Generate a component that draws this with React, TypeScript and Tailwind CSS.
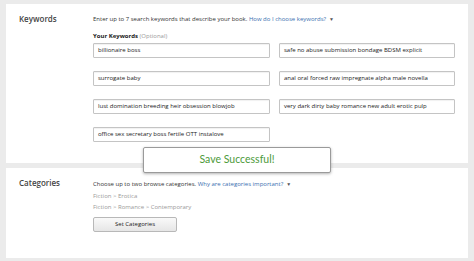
const keywords = [
  "billionaire boss",
  "safe no abuse submission bondage BDSM explicit",
  "surrogate baby",
  "anal oral forced raw impregnate alpha male novella",
  "lust domination breeding heir obsession blowjob",
  "very dark dirty baby romance new adult erotic pulp",
  "office sex secretary boss fertile OTT instalove",
];

const font = { fontFamily: '"Open Sans", "Liberation Sans", sans-serif' };

function Caret() {
  return <span className="ml-[3px] text-[5px] text-[#555] align-middle">▼</span>;
}

export default function App() {
  return (
    <div
      className="relative w-[474px] h-[261px] bg-[#ebebeb] px-[6px] pt-[4px] flex flex-col gap-[5px] text-[#333] overflow-hidden"
      style={font}
    >
      <section className="bg-white h-[159px] flex">
        <div className="w-[87px] pl-[13px] pt-[10px] text-[8px] leading-[10px] font-semibold text-[#444]">
          Keywords
        </div>
        <div className="flex-1 pt-[11px] pr-[13px]">
          <p className="text-[6px] leading-[8px]">
            Enter up to 7 search keywords that describe your book.{" "}
            <span className="text-[#3a6fb0]">How do I choose keywords?</span>
            <Caret />
          </p>
          <p className="mt-[9px] text-[6px] leading-[8px] font-bold text-[#222]">
            Your Keywords <span className="font-normal text-[#999]">(Optional)</span>
          </p>
          <div className="mt-[3px] grid grid-cols-[177px_176px] gap-x-[9px] gap-y-[13px]">
            {keywords.map((k) => (
              <div
                key={k}
                className="h-[15px] border border-[#c4c4c4] rounded-[1px] pl-[4px] flex items-center text-[6px] text-[#222] shadow-[inset_0_1px_1px_rgba(0,0,0,0.06)]"
              >
                {k}
              </div>
            ))}
          </div>
        </div>
      </section>

      <section className="bg-white h-[90px] flex">
        <div className="w-[87px] pl-[13px] pt-[10px] text-[8px] leading-[10px] font-semibold text-[#444]">
          Categories
        </div>
        <div className="flex-1 pt-[12px]">
          <p className="text-[6px] leading-[8px]">
            Choose up to two browse categories.{" "}
            <span className="text-[#3a6fb0]">Why are categories important?</span>
            <Caret />
          </p>
          <p className="mt-[4px] text-[6px] leading-[8px] text-[#999]">Fiction &gt; Erotica</p>
          <p className="mt-[3px] text-[6px] leading-[8px] text-[#999]">
            Fiction &gt; Romance &gt; Contemporary
          </p>
          <button className="mt-[6px] w-[84px] h-[15px] border border-[#b8b8b8] rounded-[2px] bg-gradient-to-b from-[#f9f9f9] to-[#e6e6e6] text-[6px] text-[#222] flex items-center justify-center">
            Set Categories
          </button>
        </div>
      </section>

      <div
        className="absolute left-[143px] top-[147px] w-[188px] h-[26px] bg-white border border-[#9a9a9a] rounded-[2px] shadow-[0_1px_3px_rgba(0,0,0,0.3)] flex items-center justify-center text-[10.5px] text-[#4c9a3a]"
        style={{ fontFamily: 'Lato, "Open Sans", sans-serif' }}
      >
        Save Successful!
      </div>
    </div>
  );
}
